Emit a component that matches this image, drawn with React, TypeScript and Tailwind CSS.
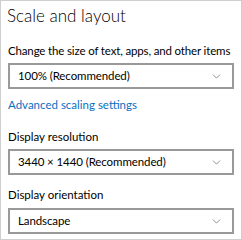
import { ChevronDown } from "lucide-react";

function Select({ value, top }: { value: string; top: string }) {
  return (
    <div className={`${top} mx-[7px] flex h-[26px] items-center justify-between border-2 border-[#999999] pl-[8px] pr-[9px]`}>
      <span className="whitespace-nowrap text-[11.5px] leading-none tracking-[-0.1px] text-black">{value}</span>
      <ChevronDown className="h-[13px] w-[13px] text-[#555]" strokeWidth={1.2} />
    </div>
  );
}

export default function App() {
  return (
    <div
      className="flex h-[240px] w-[242px] flex-col border border-[#cfcfcf] bg-white"
      style={{ fontFamily: 'Lato, "Noto Sans", sans-serif' }}
    >
      <h1 className="ml-[6px] mt-[2px] text-[17px] font-light leading-[26px] text-black">Scale and layout</h1>

      <p className="ml-[7px] mt-[15px] whitespace-nowrap text-[11.5px] leading-[14px] tracking-[-0.15px] text-black">
        Change the size of text, apps, and other items
      </p>
      <Select top="mt-[5px]" value="100% (Recommended)" />

      <a className="ml-[7px] mt-[9px] text-[11.5px] leading-[14px] text-[#0a6fc2]">Advanced scaling settings</a>

      <p className="ml-[7px] mt-[18px] text-[11.5px] leading-[14px] text-black">Display resolution</p>
      <Select top="mt-[5px]" value="3440 × 1440 (Recommended)" />

      <p className="ml-[7px] mt-[13px] text-[11.5px] leading-[14px] text-black">Display orientation</p>
      <Select top="mt-[6px]" value="Landscape" />
    </div>
  );
}
